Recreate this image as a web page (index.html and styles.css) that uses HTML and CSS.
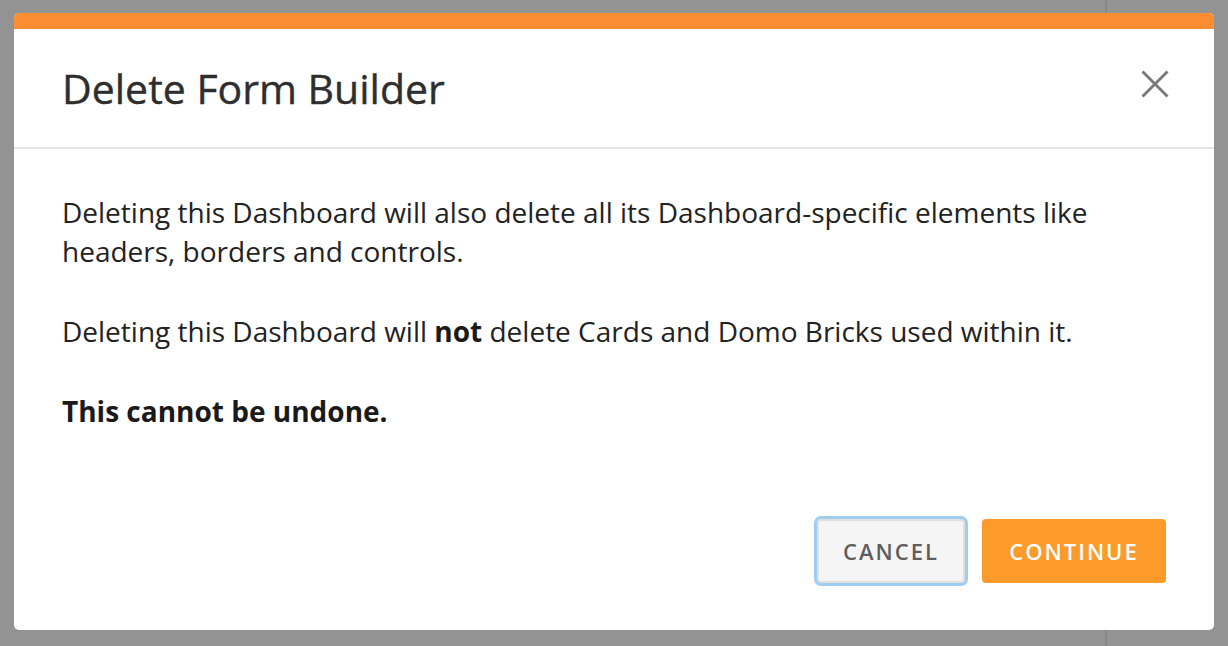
FILE: index.html
```html
<!DOCTYPE html>
<html>
<head>
<meta charset="utf-8">
<link rel="stylesheet" href="styles.css">
</head>
<body>
<div class="backdrop">
  <div class="modal">
    <div class="accent"></div>
    <div class="header">
      <h1 class="title">Delete Form Builder</h1>
      <button class="close" aria-label="Close">
        <svg width="28" height="28" viewBox="0 0 28 28"><path d="M1.5 1.5 L26.5 26.5 M26.5 1.5 L1.5 26.5" stroke="#7b7b7b" stroke-width="3" fill="none"/></svg>
      </button>
    </div>
    <div class="body">
      <p>Deleting this Dashboard will also delete all its Dashboard-specific elements like headers, borders and controls.</p>
      <p>Deleting this Dashboard will <strong>not</strong> delete Cards and Domo Bricks used within it.</p>
      <p><strong>This cannot be undone.</strong></p>
    </div>
    <div class="footer">
      <button class="btn btn-cancel">CANCEL</button>
      <button class="btn btn-continue">CONTINUE</button>
    </div>
  </div>
</div>
</body>
</html>
```

FILE: styles.css
```css
html, body {
  margin: 0;
  padding: 0;
  background: #939393;
  font-family: "Open Sans", "Noto Sans", sans-serif;
}
.backdrop {
  width: 1228px;
  height: 646px;
  box-sizing: border-box;
  padding: 13px 14px;
  background: linear-gradient(to right, transparent 1105px, #888 1105px, #888 1107px, transparent 1107px), #939393;
}
.modal {
  width: 1200px;
  height: 617px;
  background: #fff;
  border-radius: 5px;
  overflow: hidden;
  display: flex;
  flex-direction: column;
}
.accent {
  height: 16px;
  background: #fb8e33;
}
.header {
  height: 120px;
  box-sizing: border-box;
  border-bottom: 2px solid #e5e5e5;
  display: flex;
  align-items: center;
  justify-content: space-between;
  padding: 0 45px 0 48px;
}
.title {
  margin: 0;
  font-size: 41px;
  font-weight: 400;
  color: #2e2e2e;
  -webkit-text-stroke: 0.4px #2e2e2e;
}
.close {
  background: none;
  border: 0;
  padding: 0;
  width: 28px;
  height: 28px;
  margin-top: -8px;
  cursor: pointer;
}
.body {
  padding: 44px 48px 0;
  flex: 1;
}
.body p {
  margin: 0 0 41px;
  font-size: 28px;
  line-height: 39px;
  color: #222;
}
.body strong {
  font-weight: 700;
  color: #1a1a1a;
}
.footer {
  display: flex;
  justify-content: flex-end;
  align-items: center;
  gap: 17px;
  padding: 0 48px 47px;
}
.btn {
  height: 64px;
  border-radius: 4px;
  font-family: "Open Sans", "Noto Sans", sans-serif;
  font-size: 22px;
  font-weight: 600;
  letter-spacing: 2px;
  padding: 0 20px;
  cursor: pointer;
}
.btn-cancel {
  width: 148px;
  background: #f5f5f5;
  border: 2px solid #e0e0e0;
  color: #5e5e5e;
  box-shadow: 0 0 0 3px #9fcdf0;
}
.btn-continue {
  width: 184px;
  background: #fc9a2a;
  border: 0;
  color: #fff;
}
```
